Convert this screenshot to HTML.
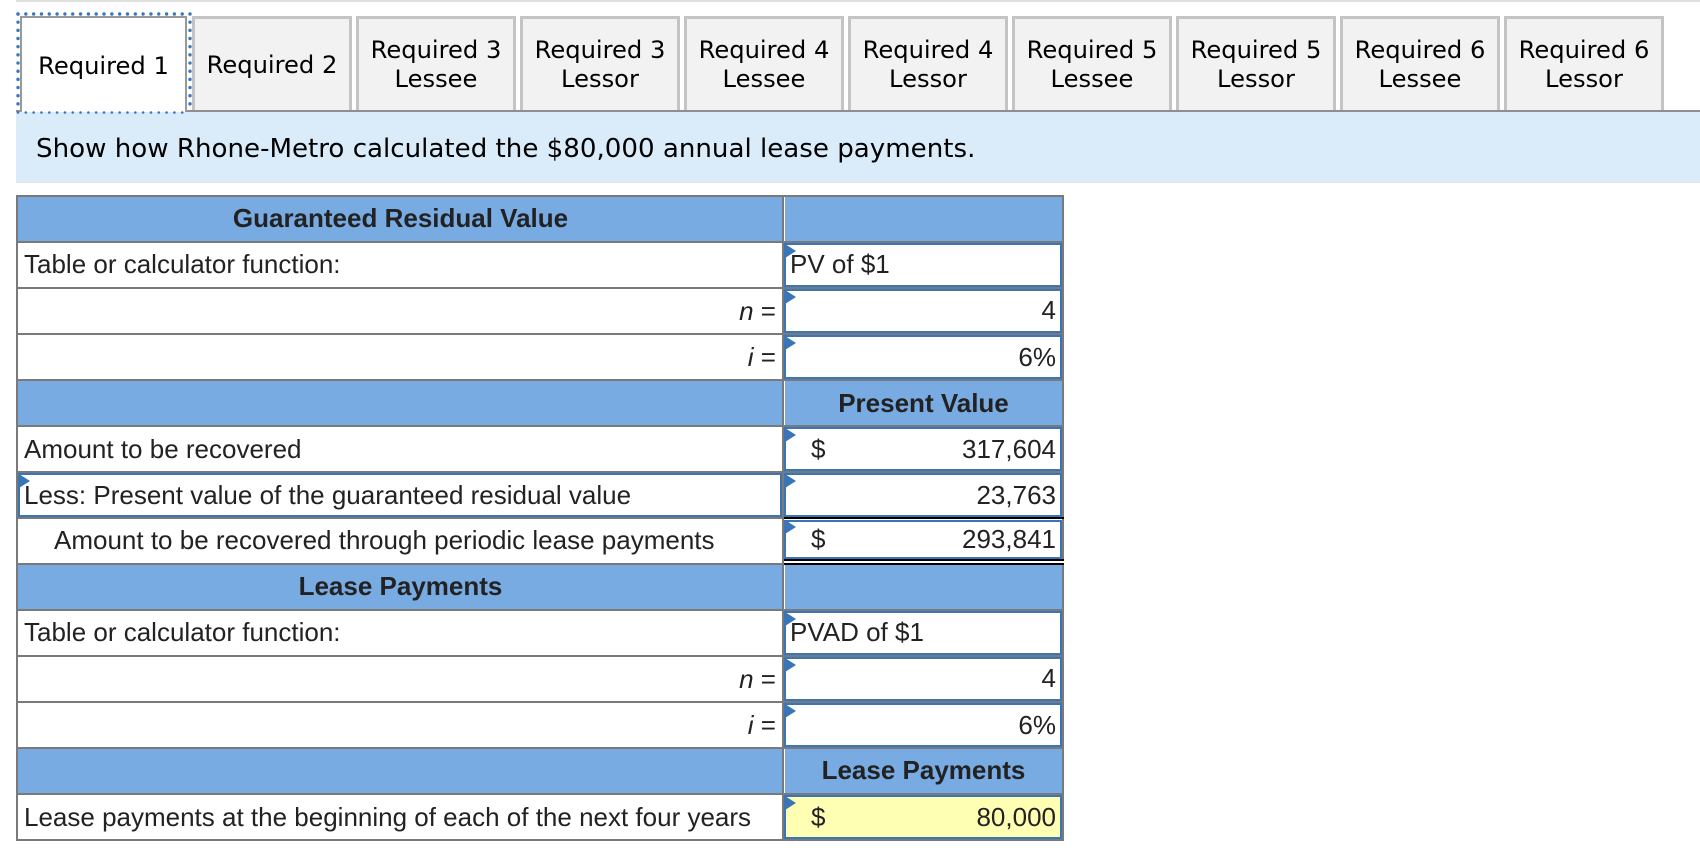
<!DOCTYPE html>
<html><head><meta charset="utf-8"><title>Lease</title>
<style>
html,body{margin:0;padding:0;background:#fff;width:1700px;height:854px;overflow:hidden}
div,span{position:absolute;box-sizing:border-box}
.tab{top:16px;height:94px;padding-top:1px;width:160px;background:#f2f2f2;border:3px solid #c4c4c4;border-bottom:0;font:24.2px/29px "DejaVu Sans",Verdana,sans-serif;color:#000;text-align:center;display:flex;align-items:center;justify-content:center;white-space:nowrap}
.hl{left:16px;width:1047px;height:2px;background:#7a7a7a}
.hd{height:44px;background:#79abe3}
.t{font:26px/44px "Liberation Sans",Arial,sans-serif;color:#222;white-space:nowrap}
.b{font-weight:bold;text-align:center}
.box{left:784px;width:278px;height:44px;border:2.5px solid #3a75b8;background:#fff}
.tri{width:0;height:0;border-left:11px solid #3a75b8;border-top:7px solid transparent;border-bottom:7px solid transparent}
.r{text-align:right}
.l{left:24px}
.in{left:790px}
.dol{left:811px}
</style></head><body>
<div style="left:16px;top:0;width:1684px;height:2px;background:#e0e0e0"></div>

<div style="left:16px;top:110px;width:1684px;height:2px;background:#8f8f8f"></div>
<div style="left:16px;top:112px;width:1684px;height:71px;background:#daebfa"></div>
<div style="left:36px;top:114px;height:71px;font:26.1px/71px 'DejaVu Sans',Verdana,sans-serif;color:#000;white-space:nowrap">Show how Rhone-Metro calculated the $80,000 annual lease payments.</div>

<div class="tab" style="left:20px;width:167px;background:#fff;border:2.5px solid #999;border-bottom:0;height:96px;padding-top:2px">Required 1</div>
<svg style="position:absolute;left:0;top:0" width="200" height="120" viewBox="0 0 200 120">
<g fill="none" stroke="#3a78bd" stroke-linecap="round">
<path d="M18 14H190" stroke-width="3.4" stroke-dasharray="0 7.82"/>
<path d="M18 14V112" stroke-width="3.4" stroke-dasharray="0 8.17"/>
<path d="M190 14V112" stroke-width="3.4" stroke-dasharray="0 8.17"/>
<path d="M18 112.5H190" stroke-width="2.6" stroke-dasharray="0 7.82"/>
</g></svg>
<div class="tab" style="left:192px;width:160px;padding-top:2px">Required 2</div>
<div class="tab" style="left:356px">Required 3<br>Lessee</div>
<div class="tab" style="left:520px">Required 3<br>Lessor</div>
<div class="tab" style="left:684px">Required 4<br>Lessee</div>
<div class="tab" style="left:848px">Required 4<br>Lessor</div>
<div class="tab" style="left:1012px">Required 5<br>Lessee</div>
<div class="tab" style="left:1176px">Required 5<br>Lessor</div>
<div class="tab" style="left:1340px">Required 6<br>Lessee</div>
<div class="tab" style="left:1504px">Required 6<br>Lessor</div>

<!-- header fills -->
<div class="hd" style="left:18px;top:197px;width:765px"></div><div class="hd" style="left:785px;top:197px;width:277px"></div>
<div class="hd" style="left:18px;top:381px;width:765px"></div><div class="hd" style="left:785px;top:381px;width:277px"></div>
<div class="hd" style="left:18px;top:565px;width:765px"></div><div class="hd" style="left:785px;top:565px;width:277px"></div>
<div class="hd" style="left:18px;top:749px;width:765px"></div><div class="hd" style="left:785px;top:749px;width:277px"></div>

<!-- grid -->
<div class="hl" style="top:195px"></div><div class="hl" style="top:241px"></div><div class="hl" style="top:287px"></div><div class="hl" style="top:333px"></div><div class="hl" style="top:379px"></div><div class="hl" style="top:425px"></div><div class="hl" style="top:471px"></div><div class="hl" style="top:517px"></div><div class="hl" style="top:563px"></div><div class="hl" style="top:609px"></div><div class="hl" style="top:655px"></div><div class="hl" style="top:701px"></div><div class="hl" style="top:747px"></div><div class="hl" style="top:793px"></div><div class="hl" style="top:839px"></div>
<div style="left:16px;top:195px;width:2px;height:646px;background:#7a7a7a"></div>
<div style="left:782px;top:195px;width:2px;height:646px;background:#7a7a7a"></div>
<div style="left:1062px;top:195px;width:2px;height:646px;background:#7a7a7a"></div>

<!-- boxes -->
<div class="box" style="top:243px"></div>
<div class="box" style="top:289px"></div>
<div class="box" style="top:335px"></div>
<div class="box" style="top:427px"></div>
<div class="box" style="top:473px"></div>
<div class="box" style="top:520px;height:39px"></div>
<div class="box" style="top:611px"></div>
<div class="box" style="top:657px"></div>
<div class="box" style="top:703px"></div>
<div class="box" style="top:795px;background:#ffffb3"></div>
<div class="box" style="left:18px;top:473px;width:764px;border-width:2.5px 2.5px 2.5px 2px"></div>

<!-- accounting lines -->
<div style="left:784px;top:517px;width:280px;height:2px;background:#000"></div>
<div style="left:784px;top:559px;width:280px;height:2px;background:#000"></div>
<div style="left:784px;top:561px;width:280px;height:2px;background:#fff"></div>
<div style="left:784px;top:563px;width:280px;height:2px;background:#000"></div>

<!-- triangles -->
<div class="tri" style="left:784.5px;top:244px"></div>
<div class="tri" style="left:784.5px;top:290px"></div>
<div class="tri" style="left:784.5px;top:336px"></div>
<div class="tri" style="left:784.5px;top:428px"></div>
<div class="tri" style="left:784.5px;top:474px"></div>
<div class="tri" style="left:784.5px;top:520px"></div>
<div class="tri" style="left:784.5px;top:612px"></div>
<div class="tri" style="left:784.5px;top:658px"></div>
<div class="tri" style="left:784.5px;top:704px"></div>
<div class="tri" style="left:784.5px;top:796px"></div>
<div class="tri" style="left:18.5px;top:474px"></div>

<!-- left text -->
<div class="t b" style="left:18px;width:765px;top:196px">Guaranteed Residual Value</div>
<div class="t l" style="top:242px">Table or calculator function:</div>
<div class="t r" style="top:289px;right:924px"><i>n</i> =</div>
<div class="t r" style="top:335px;right:924px"><i>i</i> =</div>
<div class="t b" style="left:785px;width:277px;top:381px">Present Value</div>
<div class="t l" style="top:427px">Amount to be recovered</div>
<div class="t l" style="top:473px">Less: Present value of the guaranteed residual value</div>
<div class="t" style="left:54px;top:518px">Amount to be recovered through periodic lease payments</div>
<div class="t b" style="left:18px;width:765px;top:564px">Lease Payments</div>
<div class="t l" style="top:610px">Table or calculator function:</div>
<div class="t r" style="top:657px;right:924px"><i>n</i> =</div>
<div class="t r" style="top:703px;right:924px"><i>i</i> =</div>
<div class="t b" style="left:785px;width:277px;top:748px">Lease Payments</div>
<div class="t l" style="top:795px">Lease payments at the beginning of each of the next four years</div>

<!-- right text -->
<div class="t in" style="top:242px">PV of $1</div>
<div class="t" style="top:288px;right:644px">4</div>
<div class="t" style="top:335px;right:644px">6%</div>
<div class="t dol" style="top:427px">$</div>
<div class="t" style="top:427px;right:644px">317,604</div>
<div class="t" style="top:473px;right:644px">23,763</div>
<div class="t dol" style="top:517px">$</div>
<div class="t" style="top:517px;right:644px">293,841</div>
<div class="t in" style="top:610px">PVAD of $1</div>
<div class="t" style="top:656px;right:644px">4</div>
<div class="t" style="top:703px;right:644px">6%</div>
<div class="t dol" style="top:795px">$</div>
<div class="t" style="top:795px;right:644px">80,000</div>
</body></html>
